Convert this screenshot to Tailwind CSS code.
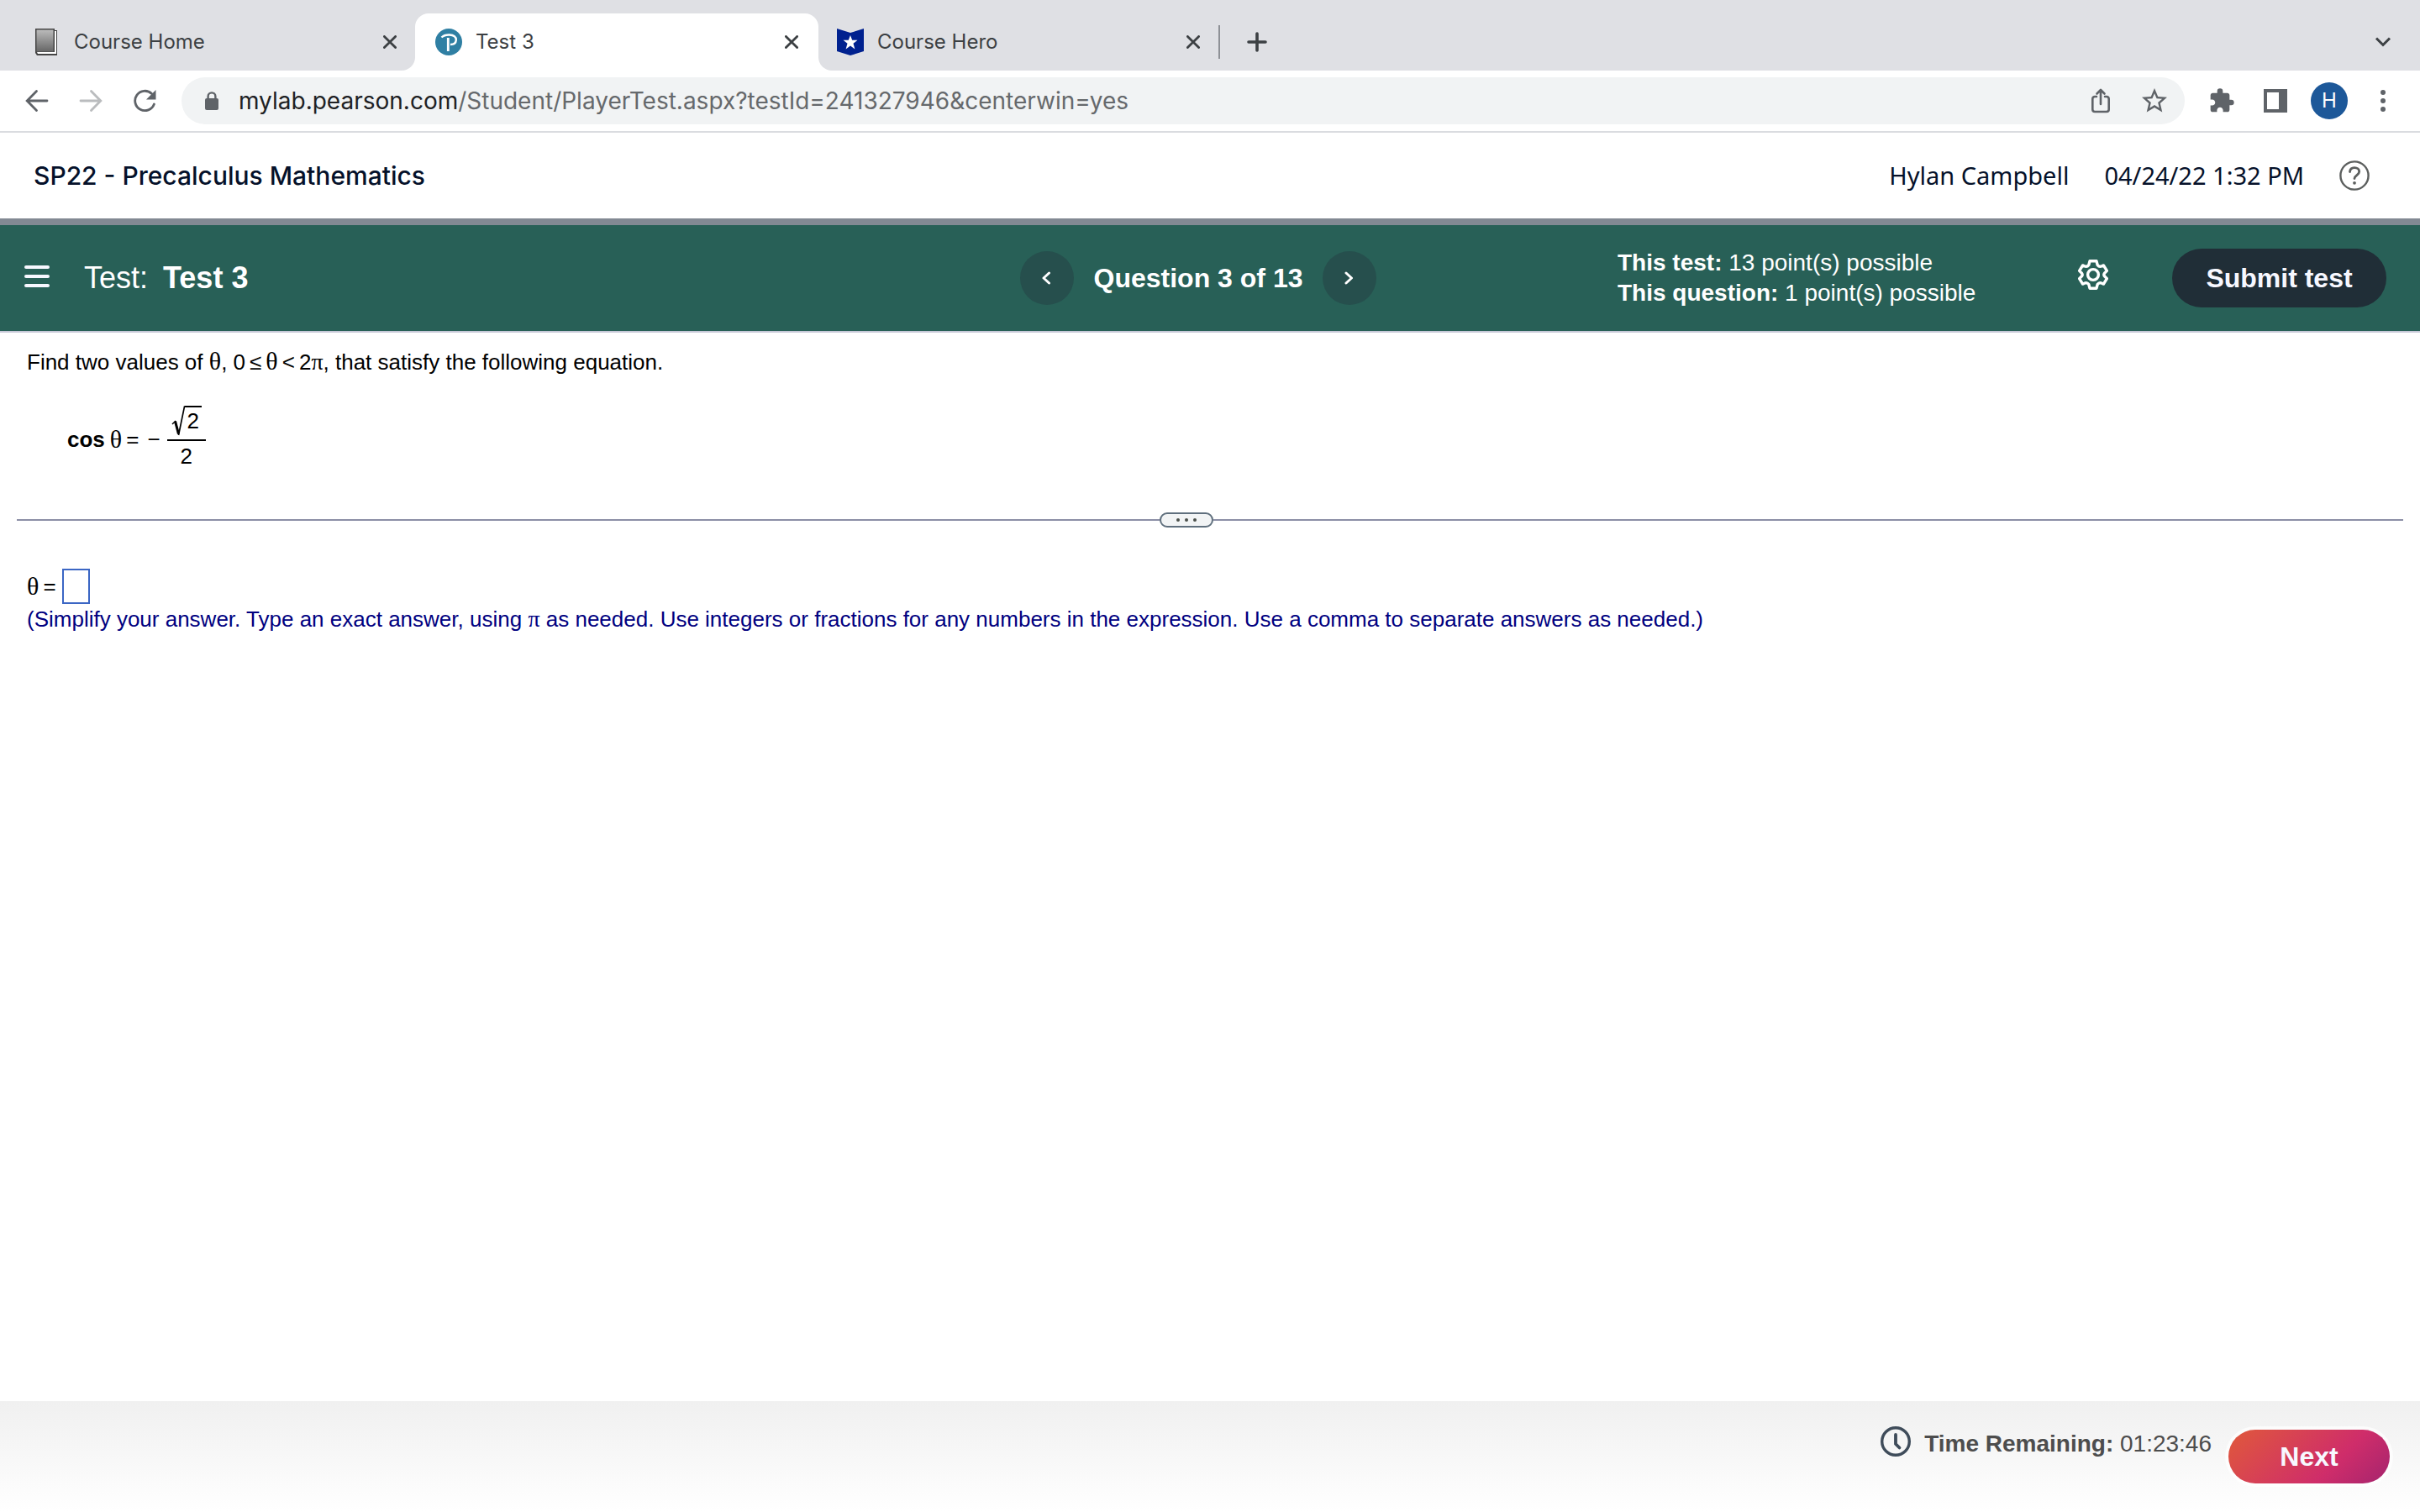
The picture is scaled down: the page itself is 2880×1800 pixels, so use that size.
<!DOCTYPE html>
<html lang="en">
<head>
<meta charset="utf-8">
<title>Test 3</title>
<script src="https://cdn.jsdelivr.net/npm/@tailwindcss/browser@4"></script>
</head>
<body class="min-h-screen flex flex-col bg-white text-black font-['Liberation_Sans',Arial,sans-serif] text-[26px] leading-[36px]">

<!-- Browser tab strip -->
<nav class="flex h-[84px] bg-white font-[Inter,sans-serif] text-[24px] text-[#3c4043]" aria-label="Tabs">
  <div class="w-[494px] shrink-0 bg-[#dfe0e4] rounded-br-2xl flex items-center pt-4 pl-[40px] pr-[20px]">
    <svg class="w-[30px] h-8 shrink-0" viewBox="0 0 30 32"><defs><linearGradient id="bk" x1="0" y1="0" x2="0" y2="1"><stop offset="0" stop-color="#bbb"/><stop offset="1" stop-color="#666"/></linearGradient></defs><path d="M2 0h23v2h3v30H4l-2-3z" fill="#444"/><path d="M25 3h2v27H5l-1-2h21z" fill="#fff"/><path d="M3.500 1.500h20v26h-20z" fill="url(#bk)"/></svg>
    <a href="#" class="ml-[18px] flex-1">Course Home</a>
    <button class="w-5 h-5 flex items-center justify-center" aria-label="Close tab"><svg class="w-4 h-4" viewBox="0 0 16 16" stroke="#3c4043" stroke-width="2.800" stroke-linecap="round"><path d="M1.400 1.400l13.200 13.200M14.600 1.400L1.400 14.600"/></svg></button>
  </div>
  <div class="w-[480px] shrink-0 bg-[#dfe0e4] pt-4">
    <div class="h-full bg-white rounded-t-2xl flex items-center pl-6 pr-[22px]">
      <svg class="w-8 h-8 shrink-0" viewBox="0 0 32 32"><circle cx="16" cy="16" r="16" fill="#2f7fa3"/><path d="M7.500 10.500C10 8 13.500 7.300 17 7.500c5 .2 8 2.600 7.800 6.100-.2 3.600-3 5.400-6.800 5.400" fill="none" stroke="#fff" stroke-width="2.400"/><path d="M15.300 11v16" stroke="#fff" stroke-width="2.800"/></svg>
      <a href="#" class="ml-4 flex-1">Test 3</a>
      <button class="w-5 h-5 flex items-center justify-center" aria-label="Close tab"><svg class="w-4 h-4" viewBox="0 0 16 16" stroke="#3c4043" stroke-width="2.800" stroke-linecap="round"><path d="M1.400 1.400l13.200 13.200M14.600 1.400L1.400 14.600"/></svg></button>
    </div>
  </div>
  <div class="flex-1 bg-[#dfe0e4] rounded-bl-2xl flex items-center pt-4 pl-[22px] pr-[34px]">
    <svg class="w-8 h-8 shrink-0" viewBox="0 0 32 32"><path d="M0 0l16 5 16-5v27l-16 5-16-5z" fill="#00218f"/><path d="M16 8l2.200 5.800h6.300l-5 4 1.900 6.600L16 20.500l-5.400 3.900 1.900-6.600-5-4h6.300z" fill="#fff"/></svg>
    <a href="#" class="ml-4 w-[366px]">Course Hero</a>
    <button class="w-5 h-5 flex items-center justify-center" aria-label="Close tab"><svg class="w-4 h-4" viewBox="0 0 16 16" stroke="#3c4043" stroke-width="2.800" stroke-linecap="round"><path d="M1.400 1.400l13.200 13.200M14.600 1.400L1.400 14.600"/></svg></button>
    <span class="ml-5 w-[2px] h-10 bg-[#8e9196]"></span>
    <button class="ml-8 flex-none" aria-label="New tab"><svg class="w-6 h-6" viewBox="0 0 24 24" stroke="#3c4043" stroke-width="3.600" stroke-linecap="round"><path d="M2 12h20M12 2v20"/></svg></button>
    <button class="ml-auto" aria-label="Search tabs"><svg class="w-5 h-3" viewBox="0 0 20 12" fill="none" stroke="#3c4043" stroke-width="3"><path d="M2 1.500l8 8 8-8"/></svg></button>
  </div>
</nav>

<!-- Browser toolbar -->
<div class="flex items-center h-[74px] border-b-2 border-[#dadce0] px-6 gap-6 font-[Inter,sans-serif]">
  <button class="w-10 flex justify-center" aria-label="Back"><svg class="w-7 h-7" viewBox="0 0 28 28" fill="none" stroke="#5f6368" stroke-width="2.800" stroke-linecap="round"><path d="M26 14H2.500M13.500 2.500L2.200 14l11.300 11.500"/></svg></button>
  <button class="w-10 flex justify-center" aria-label="Forward"><svg class="w-7 h-7" viewBox="0 0 28 28" fill="none" stroke="#babcbe" stroke-width="2.800" stroke-linecap="round"><path d="M2 14h23.500M14.500 2.500L25.800 14 14.500 25.500"/></svg></button>
  <button class="w-10 flex justify-center" aria-label="Reload"><svg class="w-7 h-7" viewBox="0 0 28 28"><path d="M22.500 5.500A11.700 11.700 0 1 0 25.400 18" fill="none" stroke="#5f6368" stroke-width="2.800" stroke-linecap="round"/><path d="M27.500 1v11.500H16z" fill="#5f6368"/></svg></button>
  <div class="flex-1 h-14 rounded-full bg-[#f1f3f4] flex items-center pl-6 pr-4">
    <svg class="w-6 h-6 shrink-0" viewBox="0 0 24 24"><rect x="4" y="9" width="16" height="14" rx="2" fill="#5f6368"/><path d="M7.600 10V6.800a4.400 4.400 0 0 1 8.800 0V10" fill="none" stroke="#5f6368" stroke-width="2.400"/></svg>
    <p class="ml-5 flex-1 text-[28px] text-[#66696c]"><span class="text-[#202124]">mylab.pearson.com</span>/Student/PlayerTest.aspx?testId=241327946&amp;centerwin=yes</p>
    <button class="w-10 mr-6 flex justify-center" aria-label="Share"><svg class="w-6 h-[30px]" viewBox="0 0 24 30" fill="none" stroke="#5f6368" stroke-width="2.600" stroke-linecap="round" stroke-linejoin="round"><path d="M7 10H5a2.700 2.700 0 0 0-2.700 2.700v12.600A2.700 2.700 0 0 0 5 28h14a2.700 2.700 0 0 0 2.700-2.700V12.700A2.700 2.700 0 0 0 19 10h-2M12 19V2.500M7.500 6.500L12 2l4.500 4.500"/></svg></button>
    <button class="w-10 flex justify-center" aria-label="Bookmark"><svg class="w-9 h-9" viewBox="0 0 24 24" fill="#5f6368"><path d="M22 9.240l-7.190-.62L12 2 9.190 8.630 2 9.240l5.460 4.730L5.820 21 12 17.270 18.180 21l-1.630-7.030L22 9.240zM12 15.400l-3.760 2.270 1-4.280-3.320-2.880 4.380-.38L12 6.100l1.710 4.040 4.380.38-3.320 2.880 1 4.280L12 15.400z"/></svg></button>
  </div>
  <button class="w-10 flex justify-center" aria-label="Extensions"><svg class="w-8 h-8" viewBox="0 0 24 24" fill="#5f6368"><path d="M20.500 11H19V7c0-1.100-.9-2-2-2h-4V3.500a2.500 2.500 0 0 0-5 0V5H4c-1.100 0-1.990.9-1.990 2v3.800H3.500c1.490 0 2.700 1.210 2.700 2.700s-1.210 2.700-2.700 2.700H2V20c0 1.100.9 2 2 2h3.800v-1.500c0-1.490 1.210-2.700 2.700-2.700s2.700 1.210 2.700 2.700V22H17c1.100 0 2-.9 2-2v-4h1.500a2.500 2.500 0 0 0 0-5z"/></svg></button>
  <button class="w-10 flex justify-center" aria-label="Side panel"><svg class="w-7 h-7" viewBox="0 0 28 28"><path d="M0 0h28v28H0z" fill="#5f6368"/><path d="M4 4h14v20H4z" fill="#fff"/></svg></button>
  <button class="w-11 h-11 -mx-[2px] rounded-full bg-[#1d5899] text-white text-[24px] flex items-center justify-center" aria-label="Profile">H</button>
  <button class="w-10 flex justify-center" aria-label="Menu"><svg class="w-7 h-7" viewBox="0 0 28 28" fill="#5f6368"><circle cx="14" cy="4" r="3"/><circle cx="14" cy="14" r="3"/><circle cx="14" cy="24" r="3"/></svg></button>
</div>

<!-- Course header -->
<header class="flex items-center h-[110px] border-b-8 border-[#828993] pl-10 pr-[60px] text-[#05112a]">
  <h1 class="flex-1 font-[Inter,sans-serif] font-medium text-[30px]">SP22 - Precalculus Mathematics</h1>
  <p class="font-['Noto_Sans',sans-serif] text-[29px] mr-[42px]">Hylan Campbell</p>
  <p class="font-['Noto_Sans',sans-serif] text-[29px] mr-[42px]">04/24/22 1:32 PM</p>
  <button aria-label="Help"><svg class="w-9 h-9" viewBox="0 0 36 36" fill="none" stroke="#5c5f5e" stroke-width="2.400" stroke-linecap="round"><circle cx="18" cy="18" r="16.600"/><path d="M12.500 13.500c.3-3.200 2.500-4.800 5.500-4.800 3.300 0 5.700 1.800 5.700 4.600 0 4.200-5.700 4.200-5.700 8.200" stroke-width="2.800"/><circle cx="18" cy="26.800" r="1.900" fill="#5c5f5e" stroke="none"/></svg></button>
</header>

<!-- Test bar -->
<div class="grid grid-cols-[1fr_424px_1fr] items-center h-[128px] bg-[#286057] border-b-2 border-[#c7c9d8] text-white pl-3 pr-10">
  <div class="flex items-center gap-10 pl-4 text-[36px]">
    <button aria-label="Menu"><svg class="w-8 h-[30px]" viewBox="0 0 32 30" stroke="#f7f8ff" stroke-width="4" stroke-linecap="round"><path d="M3 2h26M3 13h26M3 24h26"/></svg></button>
    <h2 class="flex gap-[18px]"><span>Test:</span><b>Test 3</b></h2>
  </div>
  <div class="flex items-center justify-between">
    <button class="w-16 h-16 rounded-full bg-[#264f4d] flex items-center justify-center" aria-label="Previous question"><svg class="w-4 h-4" viewBox="0 0 16 16" fill="none" stroke="#fff" stroke-width="3" stroke-linecap="round" stroke-linejoin="round"><path d="M10.500 2L4 8l6.500 6"/></svg></button>
    <b class="text-[32px]">Question 3 of 13</b>
    <button class="w-16 h-16 rounded-full bg-[#264f4d] flex items-center justify-center" aria-label="Next question"><svg class="w-4 h-4" viewBox="0 0 16 16" fill="none" stroke="#fff" stroke-width="3" stroke-linecap="round" stroke-linejoin="round"><path d="M4 2l6.500 6L4 14"/></svg></button>
  </div>
  <div class="flex items-center justify-end">
    <div class="w-[548px] text-[28px]"><p><b>This test:</b> 13 point(s) possible</p><p><b>This question:</b> 1 point(s) possible</p></div>
    <button class="mr-[76px] mb-2" aria-label="Settings"><svg class="w-9 h-9" viewBox="0 0 36 36" fill="none" stroke="#fff" stroke-width="3.400" stroke-linejoin="round"><circle cx="18" cy="18" r="6.400"/><path d="M14 1.800h8l1.200 4.700q1.600 2.200 4 1.700l3.200-1.300 4 6.500-2.900 2.800q-1.300 1.800 0 3.600l2.900 2.800-4 6.500-3.200-1.300q-2.400-.5-4 1.700L22 34.200h-8l-1.200-4.700q-1.600-2.200-4-1.700l-3.200 1.300-4-6.500 2.900-2.800q1.300-1.800 0-3.600l-2.900-2.800 4-6.500 3.200 1.300q2.400.5 4-1.700z"/></svg></button>
    <button class="w-[255px] h-[70px] rounded-full bg-[#202e37] text-[#f7f8ff] font-bold text-[32px]">Submit test</button>
  </div>
</div>

<!-- Question -->
<main class="flex-1 px-5">
  <section class="h-[213px] pt-4 px-3">
    <p>Find two values of <span class="font-['Liberation_Serif',serif] text-[30px]">θ</span>, 0<span class="mx-[5px]">≤</span><span class="font-['Liberation_Serif',serif] text-[30px]">θ</span><span class="mx-[5px]">&lt;</span>2<span class="font-['Liberation_Serif',serif] text-[28px]">π</span>, that satisfy the following equation.</p>
    <div class="mt-[34px] ml-12 flex items-center">
      <b>cos</b>
      <span class="ml-[6px] font-['Liberation_Serif',serif] text-[30px]">θ</span>
      <span class="ml-[5px]">=</span>
      <span class="ml-[10px]">−</span>
      <span class="ml-2 flex flex-col items-center">
        <span class="flex px-[5px] h-10"><svg class="w-4 h-9" viewBox="0 0 16 36" fill="none" stroke="#000"><path d="M1 22l4-4" stroke-width="1.500"/><path d="M4.500 18.500l4 15" stroke-width="3"/><path d="M8.500 35L15.500 1H16" stroke-width="1.700"/></svg><span class="border-t-2 border-black px-[3px] h-9 leading-[32px]">2</span></span>
        <span class="border-t-2 border-black self-stretch text-center h-10">2</span>
      </span>
    </div>
  </section>
  <div class="flex items-center h-[20px]">
    <span class="h-[2px] w-[1360px] shrink bg-[#8b8fa6]"></span>
    <button class="w-16 h-[18px] shrink-0 rounded-full border-2 border-[#5f6f7d] bg-[#f2f4f5] flex items-center justify-center gap-[6px]" aria-label="Resize panes"><i class="w-1 h-1 rounded-full bg-[#4a4f4a]"></i><i class="w-1 h-1 rounded-full bg-[#4a4f4a]"></i><i class="w-1 h-1 rounded-full bg-[#4a4f4a]"></i></button>
    <span class="h-[2px] flex-1 bg-[#8b8fa6]"></span>
  </div>
  <section class="pt-12 px-3">
    <div class="flex items-center">
      <label for="ans" class="flex"><span class="font-['Liberation_Serif',serif] text-[30px]">θ</span><span class="ml-[5px]">=</span></label>
      <input id="ans" class="ml-[7px] w-[33px] h-[42px] border-2 border-[#3b66c4] bg-white">
    </div>
    <p class="text-[#000080]">(Simplify your answer. Type an exact answer, using <span class="font-['Liberation_Serif',serif] text-[28px]">π</span> as needed. Use integers or fractions for any numbers in the expression. Use a comma to separate answers as needed.)</p>
  </section>
</main>

<!-- Footer -->
<footer class="h-[132px] bg-linear-to-b from-[#f0f0f0] to-white flex items-start justify-end pr-9 text-[28px] text-[#4d4d4d]">
  <svg class="mt-[30px] w-9 h-9" viewBox="0 0 36 36" fill="none" stroke="#3f4c5a" stroke-linecap="round" stroke-linejoin="round"><circle cx="18" cy="18" r="16.300" stroke-width="3.400"/><path d="M18 10v11l4.500 4.500" stroke-width="3.800"/></svg>
  <p class="ml-4 mt-[33px]"><b>Time Remaining:</b> 01:23:46</p>
  <button class="ml-5 mt-[34px] w-[192px] h-16 rounded-full ring-4 ring-white/70 bg-linear-[135deg] from-[#e0593b] via-[#cf2d6a] via-65% to-[#a5246e] text-[#f7f8ff] font-bold text-[32px]">Next</button>
</footer>
</body>
</html>
